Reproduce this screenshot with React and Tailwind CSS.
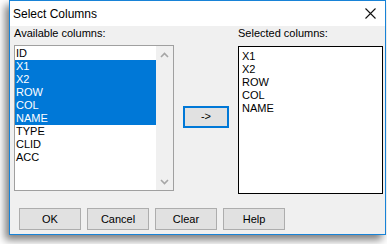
const available = ['ID', 'X1', 'X2', 'ROW', 'COL', 'NAME', 'TYPE', 'CLID', 'ACC']
const picked = ['X1', 'X2', 'ROW', 'COL', 'NAME']
const selected = new Set(picked)

const font = { fontFamily: '"Liberation Sans", Arial, sans-serif' }

function Chevron({ up }) {
  return (
    <svg width="9" height="6" viewBox="0 0 9 6">
      <path
        d={up ? 'M1 5 L4.5 1.5 L8 5' : 'M1 1 L4.5 4.5 L8 1'}
        fill="none"
        stroke="#a6a6a6"
        strokeWidth="1.6"
      />
    </svg>
  )
}

function DlgButton({ children }) {
  return (
    <button className="w-[62px] h-[22px] border border-[#adadad] bg-[#e1e1e1] text-[11px] text-black leading-none">
      {children}
    </button>
  )
}

export default function App() {
  return (
    <div className="w-[387px] h-[244px] bg-white overflow-hidden" style={font}>
      <div className="ml-[9px] w-[377px] h-[235px] border border-[#1883d7] flex flex-col shadow-[-4px_5px_8px_rgba(0,0,0,0.5)]">
        {/* Title bar */}
        <div className="h-[25px] bg-white flex items-center justify-between pl-[3px] pr-[9px]">
          <span className="text-[12px] text-black">Select Columns</span>
          <svg width="11" height="11" viewBox="0 0 11 11">
            <path d="M0.5 0.5 L10.5 10.5 M10.5 0.5 L0.5 10.5" stroke="#111" strokeWidth="1.1" />
          </svg>
        </div>

        {/* Body */}
        <div className="flex-1 bg-[#f0f0f0] flex flex-col pt-[1px]">
          <div className="flex">
            {/* Available */}
            <div className="ml-[4px] w-[160px]">
              <div className="text-[11px] leading-[13px] text-black mb-[5px]">Available columns:</div>
              <div className="h-[146px] border border-[#a0a0a0] bg-white flex">
                <div className="flex-1 pt-[1px]">
                  {available.map((c) => (
                    <div
                      key={c}
                      className={
                        'h-[13px] pl-[1px] text-[11px] leading-[13px] ' +
                        (selected.has(c) ? 'bg-[#0078d7] text-white' : 'text-black')
                      }
                    >
                      {c}
                    </div>
                  ))}
                </div>
                <div className="w-[17px] bg-[#f0f0f0] flex flex-col items-center justify-between pt-[6px] pb-[5px]">
                  <Chevron up />
                  <Chevron />
                </div>
              </div>
            </div>

            {/* Move button */}
            <div className="w-[64px] pl-[9px] pt-[76px]">
              <button className="w-[46px] h-[22px] border-2 border-[#0078d7] bg-[#e1e1e1] text-[11px] text-black leading-none">
                -&gt;
              </button>
            </div>

            {/* Selected */}
            <div className="w-[145px]">
              <div className="text-[11px] leading-[13px] text-black mb-[6px]">Selected columns:</div>
              <div className="h-[148px] border border-black bg-white pt-[3px] pl-[3px]">
                {picked.map((c) => (
                  <div key={c} className="h-[13px] text-[11px] leading-[13px] text-black">
                    {c}
                  </div>
                ))}
              </div>
            </div>
          </div>

          {/* Buttons */}
          <div className="flex gap-[6px] ml-[9px] mt-[14px]">
            <DlgButton>OK</DlgButton>
            <DlgButton>Cancel</DlgButton>
            <DlgButton>Clear</DlgButton>
            <DlgButton>Help</DlgButton>
          </div>
        </div>
      </div>
    </div>
  )
}
